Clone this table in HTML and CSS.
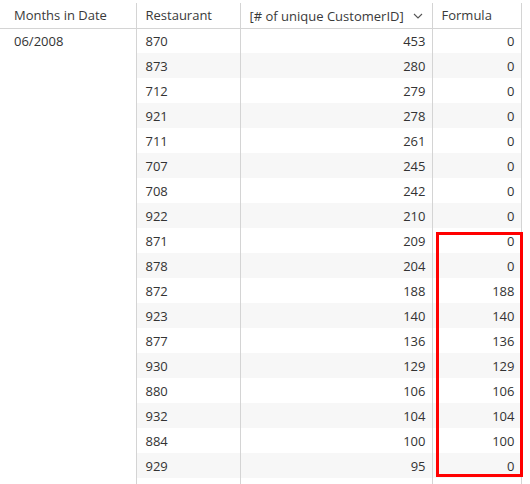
FILE: index.html
```html
<!DOCTYPE html>
<html>
<head>
<meta charset="utf-8">
<link rel="stylesheet" href="styles.css">
</head>
<body>
<div class="wrap">
<table class="grid">
  <colgroup>
    <col class="c-month"><col class="c-rest"><col class="c-count"><col class="c-form">
  </colgroup>
  <thead>
    <tr>
      <th>Months in Date</th>
      <th>Restaurant</th>
      <th class="sorted"><span>[# of unique CustomerID]</span>
        <svg class="chev" width="10" height="6" viewBox="0 0 10 6"><path d="M1 1 L5 5 L9 1" fill="none" stroke="#555" stroke-width="1.1"/></svg>
      </th>
      <th>Formula</th>
    </tr>
  </thead>
  <tbody>
    <tr><td class="month" rowspan="19">06/2008</td><td>870</td><td class="num">453</td><td class="num">0</td></tr>
    <tr><td>873</td><td class="num">280</td><td class="num">0</td></tr>
    <tr><td>712</td><td class="num">279</td><td class="num">0</td></tr>
    <tr><td>921</td><td class="num">278</td><td class="num">0</td></tr>
    <tr><td>711</td><td class="num">261</td><td class="num">0</td></tr>
    <tr><td>707</td><td class="num">245</td><td class="num">0</td></tr>
    <tr><td>708</td><td class="num">242</td><td class="num">0</td></tr>
    <tr><td>922</td><td class="num">210</td><td class="num">0</td></tr>
    <tr><td>871</td><td class="num">209</td><td class="num">0</td></tr>
    <tr><td>878</td><td class="num">204</td><td class="num">0</td></tr>
    <tr><td>872</td><td class="num">188</td><td class="num">188</td></tr>
    <tr><td>923</td><td class="num">140</td><td class="num">140</td></tr>
    <tr><td>877</td><td class="num">136</td><td class="num">136</td></tr>
    <tr><td>930</td><td class="num">129</td><td class="num">129</td></tr>
    <tr><td>880</td><td class="num">106</td><td class="num">106</td></tr>
    <tr><td>932</td><td class="num">104</td><td class="num">104</td></tr>
    <tr><td>884</td><td class="num">100</td><td class="num">100</td></tr>
    <tr><td>929</td><td class="num">95</td><td class="num">0</td></tr>
    <tr><td>&nbsp;</td><td class="num">&nbsp;</td><td class="num">&nbsp;</td></tr>
  </tbody>
</table>
<div class="highlight"></div>
</div>
</body>
</html>
```
FILE: styles.css
```css
html, body {
  margin: 0;
  padding: 0;
  background: #ffffff;
  overflow: hidden;
}
body {
  font-family: "Open Sans", "Noto Sans", sans-serif;
  font-size: 13px;
  color: #333333;
}
.wrap {
  position: relative;
  padding-top: 3px;
}
.grid {
  border-collapse: collapse;
  table-layout: fixed;
  width: 521px;
}
.c-month { width: 136px; }
.c-rest { width: 104px; }
.c-count { width: 192px; }
.c-form { width: 89px; }
.grid th, .grid td {
  height: 24px;
  padding: 0 0 0 9px;
  border-right: 1px solid #d4d4d4;
  text-align: left;
  font-weight: normal;
  white-space: nowrap;
  overflow: hidden;
  box-sizing: border-box;
}
.grid th {
  border-bottom: 1px solid #d4d4d4;
  color: #3a3a3a;
  vertical-align: middle;
}
.grid th:first-child, .grid td.month { padding-left: 14px; }
.grid td { vertical-align: middle; }
.grid td.month { vertical-align: top; padding-top: 3px; }
.grid td.num { text-align: right; padding: 0 6px 0 0; }
.grid tbody tr:nth-child(even) td { background: #f7f7f7; }
.grid tbody tr { height: 25px; }
.grid thead tr { height: 25px; }
.sorted span { vertical-align: middle; }
.chev { vertical-align: middle; margin-left: 6px; }
.highlight {
  position: absolute;
  left: 436px;
  top: 232px;
  width: 87px;
  height: 245px;
  box-sizing: border-box;
  border: 3px solid #ff0000;
}
```
